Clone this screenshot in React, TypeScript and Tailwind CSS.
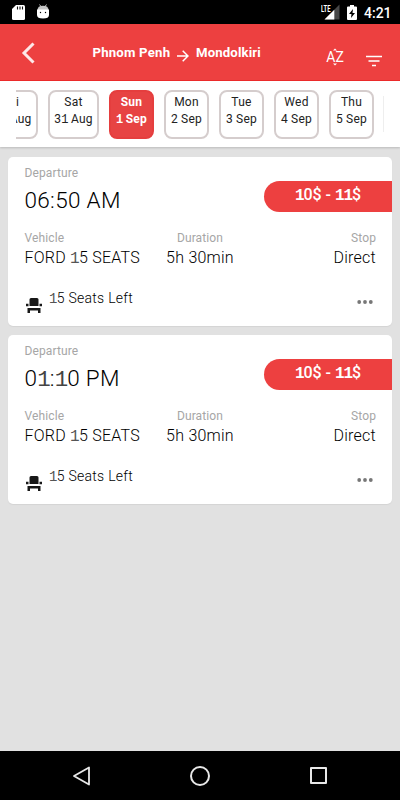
import React from 'react';

// Roman text in Roboto; the figure one uses a footed glyph.
function T({ s, className = '' }: { s: string; className?: string }) {
  return (
    <span className={`whitespace-pre ${className}`}>
      {s.split(/(1)/).map((p, i) =>
        p === '1' ? <span key={i} className="font-['Liberation_Mono',monospace] tracking-[-0.050em]">1</span> : p,
      )}
    </span>
  );
}

function StatusBar() {
  return (
    <div className="flex h-6 shrink-0 items-center bg-black text-white">
      <svg className="ml-3 mt-px h-[15px] w-[13px]" viewBox="0 0 13 15">
        <path fill="#fff" d="M4 0h7.500q1.500 0 1.500 1.500v12q0 1.500-1.500 1.500H1.500Q0 15 0 13.500V4z" />
        <path stroke="#111" strokeWidth="1.100" d="M5.500 1.500v3M8 1.500v3M10.500 1.500v3" />
      </svg>
      <svg className="ml-3 -mt-[2px] h-[15px] w-[12px]" viewBox="0 0 12 15">
        <path stroke="#bbb" d="M2.500.5l1.500 2M9.500.5L8 2.500" />
        <path fill="#c4c4c4" d="M.5 6Q.5 1.700 6 1.700T11.500 6z" />
        <path fill="#fff" d="M0 5.500h12V11q0 3.500-6 3.500T0 11z" />
        <circle cx="3.500" cy="8.500" r=".7" /><circle cx="8.500" cy="8.500" r=".7" />
      </svg>
      <div className="ml-auto flex items-center">
        <svg className="h-[16px] w-[19px]" viewBox="0 0 19 16">
          <path fill="#484848" d="M18.500 .5V15.500H3.500z" />
          <path fill="#fff" d="M13.300 5.700v9.800H3.500z" />
          <path fill="#000" d="M0 0h9.500v8H0z" />
          <text x="0" y="7.500" fill="#fff" fontSize="9" textLength="9.500" lengthAdjust="spacingAndGlyphs" fontFamily="Roboto, sans-serif" fontWeight="700">LTE</text>
        </svg>
        <svg className="ml-[7px] mr-[7px] h-[15px] w-[10px]" viewBox="0 0 10 15">
          <path fill="#fff" d="M3 0h4v1.500h2q1 0 1 1V14q0 1-1 1H1q-1 0-1-1V2.500q0-1 1-1h2z" />
          <path fill="#000" d="M6 4L2 9h2.500L4 13l4-5H5.500z" />
        </svg>
        <span className="mr-[9px] mt-[2px] w-[27px] whitespace-nowrap text-[14px] leading-4 font-medium">4:21</span>
      </div>
    </div>
  );
}

function Header() {
  return (
    <header className="flex h-[57px] shrink-0 items-start border-b border-[#ef2020] bg-[#ed4040] text-white">
      <svg className="ml-[21px] mt-[18px] h-[22px] w-[14px]" viewBox="0 0 14 22" fill="none" stroke="#fde8e8" strokeWidth="3">
        <path d="M12.500 1.500L3 11l9.500 9.500" />
      </svg>
      <span className="ml-[57.500px] mt-[20.500px] w-[77.500px] text-[13.200px] leading-4 font-bold whitespace-nowrap tracking-[0.015em]">Phnom Penh</span>
      <svg className="ml-[7px] mt-[26px] h-[12px] w-[12px]" viewBox="0 0 12 12" fill="none" stroke="#fff" strokeWidth="1.500">
        <path d="M0 6h11M5.700.7L11 6l-5.300 5.300" />
      </svg>
      <span className="ml-[7px] mt-[20.500px] w-[65px] text-[13.200px] leading-4 font-bold whitespace-nowrap tracking-[0.010em]">Mondolkiri</span>
      <svg className="ml-[64px] mt-[24px] h-[18px] w-[20px]" viewBox="0 0 20 18">
        <text x="1.300" y="14" textLength="17.500" lengthAdjust="spacingAndGlyphs" fill="#fff" fontSize="14.500" fontFamily="Roboto, sans-serif">AZ</text>
        <path fill="#fff" d="M8 2.500L10 .5l2 2zM8 15.500h4l-2 2z" />
      </svg>
      <svg className="ml-[21px] mt-[31px] h-[12px] w-[16px]" viewBox="0 0 16 12" stroke="#fff" strokeWidth="1.700">
        <path d="M0 1.500h16M2.500 6h11M6 10.500h4" />
      </svg>
    </header>
  );
}

const days: [string, string][] = [['Mon', '2 Sep'], ['Tue', '3 Sep'], ['Wed', '4 Sep'], ['Thu', '5 Sep']];

function Day({ d, n, className }: { d: string; n: string; className: string }) {
  return (
    <div className={`mr-[10px] flex h-[49px] shrink-0 flex-col items-center rounded-[8px] border-2 pt-[1.500px] text-[12px] leading-[17.500px] tracking-[0.020em] ${className}`}>
      <span>{d}</span>
      <T s={n} />
    </div>
  );
}

function Dates() {
  return (
    <div className="h-[66px] shrink-0 bg-white px-4 pt-2 shadow-[0_1px_2px_#bbb]">
      <div className="flex h-[52px] overflow-hidden pt-px">
        <Day d="Fri" n="30 Aug" className="-ml-[30px] w-[52px] border-[#d5cdcd] text-[#222]" />
        <Day d="Sat" n="31 Aug" className="w-[51px] border-[#d5cdcd] text-[#222]" />
        <Day d="Sun" n="1 Sep" className="w-[45px] border-[#e53e3e] bg-[#e74343] font-bold text-white" />
        {days.map(([d, n]) => <Day key={d} d={d} n={n} className="w-[45px] border-[#d5cdcd] text-[#222]" />)}
        <div className="-ml-px mt-[6px] h-[36px] w-px shrink-0 bg-[#eee]" />
      </div>
    </div>
  );
}

function Field({ label, value, className = '' }: { label: string; value: string; className?: string }) {
  return (
    <div className={`flex flex-col ${className}`}>
      <span className="text-[12px] leading-[17px] tracking-[0.010em] text-[#a6a6a6]">{label}</span>
      <T s={value} className="-mt-[0.500px] text-[16px] leading-[21px] font-light tracking-[0.015em] text-black [&>span]:text-[#555]" />
    </div>
  );
}

function Trip({ time }: { time: string }) {
  return (
    <article className="flex h-[169px] shrink-0 flex-col rounded-[5px] bg-white pl-[16.500px] shadow-[0_1px_1px_#d4d4d4]">
      <div className="flex h-[73px] justify-between pt-2">
        <div className="flex flex-col">
          <span className="text-[12px] leading-[17px] tracking-[0.010em] text-[#a6a6a6]">Departure</span>
          <T s={time} className="mt-[4px] text-[22.500px] leading-7 font-light tracking-[0.014em] text-black [&>span]:text-[#444]" />
        </div>
        <div className="mt-[16px] h-[31px] w-[128px] rounded-l-full bg-[#ed4040] text-center text-[16px] leading-[28px] font-medium text-white">
          <T s="10$ - 11$" className="[&>span]:font-bold [&>span]:tracking-[-0.070em]" />
        </div>
      </div>
      <div className="flex pr-4">
        <Field label="Vehicle" value="FORD 15 SEATS" className="w-[116px]" />
        <Field label="Duration" value="5h 30min" className="ml-[25px] w-[69px] items-center" />
        <Field label="Stop" value="Direct" className="ml-auto items-end" />
      </div>
      <div className="mt-[18px] flex h-8 items-start pr-[19px]">
        <svg className="mt-[10.500px] h-[16px] w-[18px]" viewBox="0 0 18 16" fill="#181818">
          <path d="M6 0h6q1.500 0 1.500 1.500V8h-9V1.500Q4.500 0 6 0zM1 5.800h2.500v2.500H1zM14.500 5.800H17v2.500h-2.500zM2.500 10h13v5H13v-2.500H5V15H2.500z" />
        </svg>
        <T s="15 Seats Left" className="ml-[6.500px] text-[14px] leading-5 font-light tracking-[0.020em] text-black [&>span]:text-[#555]" />
        <svg className="mt-[12px] ml-auto h-[4px] w-[16px]" viewBox="0 0 16 4" fill="#777">
          <circle cx="2.200" cy="2" r="1.900" /><circle cx="8" cy="2" r="1.900" /><circle cx="13.800" cy="2" r="1.900" />
        </svg>
      </div>
    </article>
  );
}

export default function App() {
  return (
    <div className="flex h-[800px] w-[400px] flex-col overflow-hidden bg-[#e1e1e1] font-[Roboto,sans-serif] text-black">
      <StatusBar />
      <Header />
      <Dates />
      <main className="flex flex-1 flex-col gap-[9px] px-2 pt-[10px]">
        <Trip time="06:50 AM" />
        <Trip time="01:10 PM" />
      </main>
      <nav className="flex h-[49px] shrink-0 items-center bg-black pl-[73px]">
        <svg className="h-[20px] w-[17px]" viewBox="0 0 17 20" fill="none" stroke="#e8e8e8" strokeWidth="1.800" strokeLinejoin="round">
          <path d="M16 1.500v17L1 10z" />
        </svg>
        <div className="ml-[100px] size-5 rounded-full border-2 border-[#e8e8e8]" />
        <div className="ml-[100px] size-[17px] rounded-[1px] border-2 border-[#e8e8e8]" />
      </nav>
    </div>
  );
}
